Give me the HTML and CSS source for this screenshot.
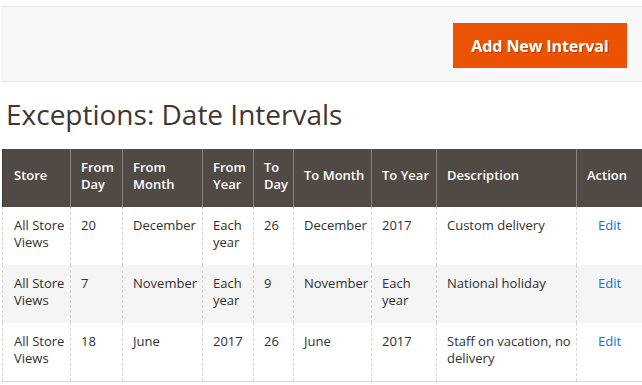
FILE: index.html
```html
<!DOCTYPE html>
<html>
<head>
<meta charset="utf-8">
<link rel="stylesheet" href="styles.css">
</head>
<body>
<div class="actions-bar">
  <button class="primary-btn">Add New Interval</button>
</div>
<h1 class="page-title">Exceptions: Date Intervals</h1>
<table class="data-grid">
  <colgroup>
    <col class="c-store"><col class="c-fday"><col class="c-fmonth"><col class="c-fyear"><col class="c-tday"><col class="c-tmonth"><col class="c-tyear"><col class="c-desc"><col class="c-action">
  </colgroup>
  <thead>
    <tr>
      <th>Store</th><th>From Day</th><th>From Month</th><th>From Year</th><th>To Day</th><th>To Month</th><th>To Year</th><th>Description</th><th>Action</th>
    </tr>
  </thead>
  <tbody>
    <tr>
      <td>All Store Views</td><td>20</td><td>December</td><td>Each year</td><td>26</td><td>December</td><td>2017</td><td>Custom delivery</td><td class="act"><a href="#">Edit</a></td>
    </tr>
    <tr class="alt">
      <td>All Store Views</td><td>7</td><td>November</td><td>Each year</td><td>9</td><td>November</td><td>Each year</td><td>National holiday</td><td class="act"><a href="#">Edit</a></td>
    </tr>
    <tr>
      <td>All Store Views</td><td>18</td><td>June</td><td>2017</td><td>26</td><td>June</td><td>2017</td><td>Staff on vacation, no delivery</td><td class="act"><a href="#">Edit</a></td>
    </tr>
  </tbody>
</table>
</body>
</html>
```

FILE: styles.css
```css
html, body {
  margin: 0;
  padding: 0;
  background: #fff;
  font-family: "Open Sans", "Liberation Sans", sans-serif;
  color: #303030;
  overflow: hidden;
}

.actions-bar {
  margin-top: 6px;
  border-top: 1px solid #e3e3e3;
  border-bottom: 1px solid #e3e3e3;
  background: #f8f8f8;
  display: flex;
  justify-content: flex-end;
  padding: 16px 15px 13px 0;
  margin-left: 1px;
}

.primary-btn {
  background: #eb5202;
  border: 0;
  color: #fff;
  font-family: "Open Sans", "Liberation Sans", sans-serif;
  font-size: 16px;
  font-weight: 700;
  letter-spacing: -0.1px;
  width: 174px;
  height: 45px;
  padding: 0;
  text-shadow: 1px 1px 0 rgba(0, 0, 0, 0.25);
  cursor: pointer;
}

.page-title {
  margin: 0;
  padding: 14px 0 0 6px;
  height: 53px;
  font-size: 28px;
  font-weight: 400;
  line-height: 36px;
  color: #41362f;
}

.data-grid {
  margin-left: 2px;
  width: 640px;
  table-layout: fixed;
  border-collapse: collapse;
  font-size: 13px;
  line-height: 17px;
}

.c-store { width: 68px; }
.c-fday { width: 52px; }
.c-fmonth { width: 80px; }
.c-fyear { width: 51px; }
.c-tday { width: 40px; }
.c-tmonth { width: 78px; }
.c-tyear { width: 65px; }
.c-desc { width: 140px; }
.c-action { width: 66px; }

.data-grid th {
  background: #514943;
  color: #fff;
  font-weight: 600;
  text-align: left;
  vertical-align: middle;
  height: 58px;
  box-sizing: border-box;
  padding: 0 2px 5px 10px;
  border-left: 1px solid #8a837f;
  border-right: 1px solid #8a837f;
}

.data-grid th:first-child {
  border-left: 1px solid #3f3a36;
  padding-left: 11px;
}

.data-grid td {
  vertical-align: top;
  height: 58px;
  box-sizing: border-box;
  padding: 10px 2px 10px 10px;
  border-left: 1px dashed #d6d6d6;
  border-right: 1px dashed #d6d6d6;
}

.data-grid td:first-child {
  padding-left: 11px;
}

.data-grid tbody tr:last-child td {
  border-bottom: 1px solid #d6d6d6;
}

.data-grid tr.alt td {
  background: #f5f5f5;
}

.data-grid td.act {
  text-align: center;
  padding-left: 2px;
}

.data-grid a {
  color: #007bdb;
  text-decoration: none;
}
```
